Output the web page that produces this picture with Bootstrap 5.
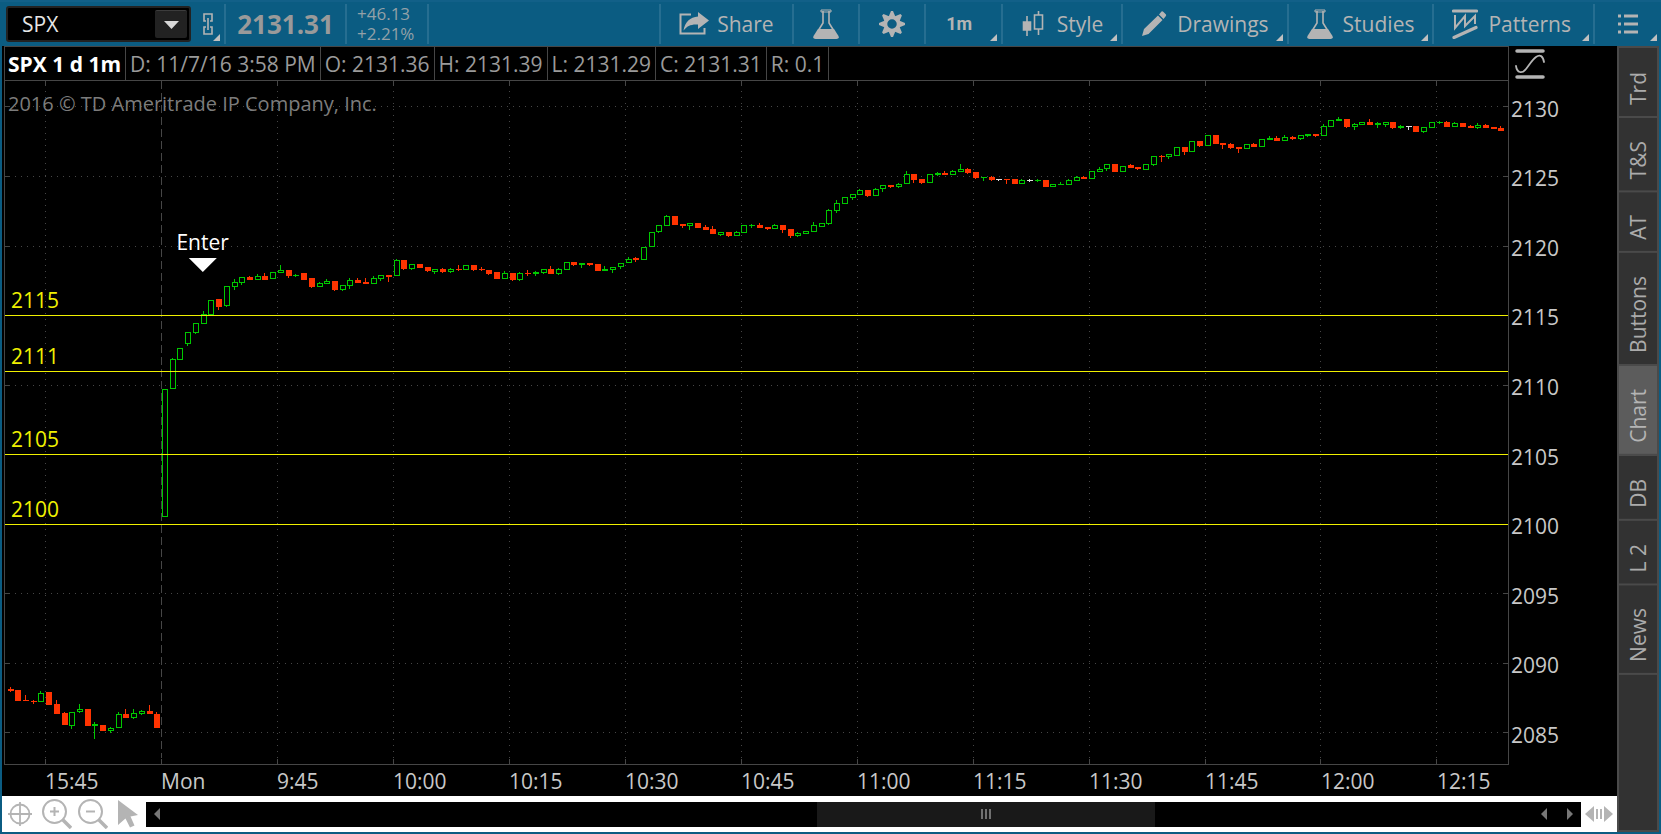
<!DOCTYPE html>
<html lang="en">
<head>
<meta charset="utf-8">
<meta name="viewport" content="width=device-width, initial-scale=1">
<title>SPX 1 d 1m</title>
<link href="https://cdn.jsdelivr.net/npm/bootstrap@5.3.0/dist/css/bootstrap.min.css" rel="stylesheet">
<style>
:root{--frame:#0b5c82;--ink:#b4b4b4;--line:#464646}
body{font-family:"Open Sans","Noto Sans",sans-serif;font-size:21px;line-height:28px;color:#c8c8c8;background:#000}
button{font:inherit;color:inherit;background:none;border:0;padding:0}
svg{display:block;flex:none}
.topbar{height:46px;flex:none;background:var(--frame);border-top:2px solid #126088;padding:2px 0 2px 6px;color:var(--ink)}
.symbol-box{width:185px;height:36px;margin:2px 0;background:#000;border:2px solid #222;border-radius:3px;padding:2px}
.symbol-box input{width:100%;min-width:0;background:#000;border:0;color:#e6e6e6;font-size:21px;padding:0 0 0 12px;outline:0}
.symbol-box button{width:32px;flex:none;background:#222;border-top:1px solid #3c3c3c;border-radius:2px;display:flex;align-items:center;justify-content:center}
.tool{position:relative;height:40px;border-left:2px solid #266e91;display:flex;align-items:center;justify-content:center;gap:10px;padding:0 18px;white-space:nowrap}
.tool.slim{width:66px;padding:0}
.tool.menu-tool{width:68px;padding:0}
.tool.share{gap:8px}
.tool.patterns{padding-right:22px}
.tool.wide{width:77px;padding:0 8px 0 0;font-family:Roboto,sans-serif;font-weight:700;font-size:18px}
.tool.link-tool{width:33px;padding:0;border:0}
.has-menu::after{content:"";position:absolute;right:4px;bottom:3px;border-left:7px solid transparent;border-bottom:7px solid #c0c0c0}
.quote{border-left:2px solid #266e91;height:40px;font-size:26px;font-weight:700;color:#9a9a9a;width:121px;display:flex;align-items:center;justify-content:center}
.delta{border-left:2px solid #266e91;border-right:2px solid #266e91;height:40px;width:84px;padding-left:10px;font-size:17px;line-height:20px;color:#93a1a8;display:flex;flex-direction:column;justify-content:center}
.frame{border:2px solid var(--frame);border-top:0;min-height:0}
.chart-area{min-height:0}
.chart-main{padding-left:2px;min-height:0}
.info{height:34px;flex:none;border-top:1px solid var(--line);border-left:1px solid var(--line);border-right:1px solid var(--line);color:#9a9a9a}
.info span{border-right:1px solid var(--line);padding:0 4px;display:flex;align-items:center;white-space:nowrap}
.info .title{color:#fff;font-weight:700;padding-left:3px}
.plot{position:relative;min-height:0}
.plot svg{position:absolute;inset:0;width:100%;height:100%}
.notice{position:absolute;left:4px;top:10px;color:#7c7c7c;font-size:20px}
.level{position:absolute;left:7px;color:#f0f000;padding-bottom:1px;transform:translateY(-100%)}
.marker{position:absolute;left:13.200%;top:28.100%;transform:translate(-50%,-100%);color:#fff;display:flex;flex-direction:column;align-items:center}
.marker::after{content:"";margin-top:2px;border:14px solid transparent;border-top-color:#fff;border-bottom:0}
.times{height:31px;flex:none;display:grid;grid-template-columns:41fr repeat(12,116fr) 72fr;align-items:center}
.times span{min-width:0;white-space:nowrap}
.prices{width:108px;min-height:0;display:grid;grid-template-rows:280fr repeat(10,695fr) 265fr}
.prices>*{min-height:0;display:flex;align-items:center;padding-left:2px}
.prices .scale{align-items:flex-start;padding:3px 0 0 6px;overflow:visible;height:0}
.strip{height:36px;flex:none;background:#fff}
.strip-tools{width:144px;gap:6px;padding-left:6px}
.track{height:25px;background:#000}
.thumb{background:#191919;width:23.600%;margin-left:45.200%;display:flex;align-items:center;justify-content:center}
.side{width:42px;background:#323232;border:2px solid #4a4a4a;padding-top:1px}
.side button{writing-mode:vertical-rl;transform:rotate(180deg);border-top:2px solid #4a4a4a;padding:11px 0 23px;line-height:38px;color:#ababab;text-align:left;width:100%}
.side button.active{background:#5c5c5c;color:#b4b4b4}
</style>
</head>
<body>
<div class="d-flex flex-column vh-100">
<header class="topbar d-flex">
  <div class="symbol-box d-flex">
    <input type="text" value="SPX" aria-label="Symbol">
    <button type="button" aria-label="Symbol list"><svg width="15" height="8"><path d="M0 0h15l-7.500 8z" fill="#d8d8d8"/></svg></button>
  </div>
  <button type="button" class="tool link-tool has-menu" aria-label="Link"><svg width="12" height="24" viewBox="0 0 12 24" fill="none" stroke="#b4b4b4" stroke-width="1.600"><path d="M4 9H2V2h8v7H8M4 15H2v7h8v-7H8M6 6v12"/></svg></button>
  <div class="quote">2131.31</div>
  <div class="delta"><span>+46.13</span><span>+2.21%</span></div>
  <nav class="d-flex ms-auto" aria-label="Chart tools">
    <button type="button" class="tool share"><svg width="30" height="24" viewBox="0 0 30 24"><path d="M12 2.500H1.500v19h24V16" fill="none" stroke="#b4b4b4" stroke-width="2"/><path d="M19 0l11 8.500-11 8.500v-4.500C12 12 8 14 4.500 18.500 6 10 11 5 19 4.500z" fill="#b4b4b4"/></svg>Share</button>
    <button type="button" class="tool slim" aria-label="Edit studies"><svg width="26" height="30" viewBox="0 0 26 30"><use href="#flask"/></svg></button>
    <button type="button" class="tool slim" aria-label="Settings"><svg id="gear" width="26" height="26" viewBox="-13 -13 26 26"></svg></button>
    <button type="button" class="tool wide has-menu">1m</button>
    <button type="button" class="tool has-menu"><svg width="26" height="26" viewBox="0 0 26 26" fill="none" stroke="#b4b4b4" stroke-width="1.600"><path d="M6 5v20M17.500 0v4M17.500 18v6M13.500 4h8v14h-8z"/><path d="M2.500 11h7v8h-7z" fill="#b4b4b4"/></svg>Style</button>
    <button type="button" class="tool has-menu"><svg width="26" height="26" viewBox="0 0 26 26" fill="#b4b4b4"><path d="M1 25l2-7L17 4.500l4.500 4.500L7.500 23zM18 3.500l2.500-3q1-.5 2 .5l2.500 2.500q.5 1-.5 2L22.500 8z"/></svg>Drawings</button>
    <button type="button" class="tool has-menu"><svg width="26" height="30" viewBox="0 0 26 30"><g id="flask"><path d="M8 1h10v2H8z" fill="none" stroke="#b4b4b4"/><path d="M10 2v12L5 22M16 2v12l5 8" fill="none" stroke="#b4b4b4" stroke-width="1.600"/><path d="M5 20h16l4.500 7q1 3-2 3h-21q-3 0-2-3z" fill="#b4b4b4"/></g></svg>Studies</button>
    <button type="button" class="tool patterns has-menu"><svg width="26" height="30" viewBox="0 0 26 30" fill="none" stroke="#b4b4b4"><path d="M1.500 2h23" stroke-width="3.200" stroke-linecap="round"/><path d="M3 6v13L13 7v10l10-10v8" stroke-width="2"/><path d="M2 28.500L24 18.500" stroke-width="3.200" stroke-linecap="round"/></svg>Patterns</button>
    <button type="button" class="tool menu-tool has-menu" aria-label="Menu"><svg width="20" height="20" viewBox="0 0 20 20" stroke="#b4b4b4" stroke-width="3"><path d="M0 2h3M6 2h14M0 10h3M6 10h14M0 18h3M6 18h14"/></svg></button>
  </nav>
</header>

<main class="frame d-flex flex-grow-1">
  <div class="d-flex flex-column flex-grow-1">
    <section class="chart-area d-flex flex-grow-1" aria-label="Chart">
      <div class="chart-main d-flex flex-column flex-grow-1">
        <div class="info d-flex"><span class="title">SPX 1 d 1m</span><span>D: 11/7/16 3:58 PM</span><span>O: 2131.36</span><span>H: 2131.39</span><span>L: 2131.29</span><span>C: 2131.31</span><span>R: 0.1</span></div>
        <div class="plot flex-grow-1">
          <svg id="plot" viewBox="4 80 1505 685" preserveAspectRatio="none" shape-rendering="crispEdges"></svg>
          <div class="notice">2016 © TD Ameritrade IP Company, Inc.</div>
          <div class="marker">Enter</div>
        </div>
        <div class="times" id="times"><span></span></div>
      </div>
      <div class="prices" id="prices"><div class="scale"><svg width="30" height="30" viewBox="0 0 30 30" fill="none" stroke="#b4b4b4" stroke-linecap="round"><path d="M2 2h26M2 28h26" stroke-width="3.500"/><path d="M1 17C2 24 7 25 11 20S17 11 21 8s7-1 8 5" stroke-width="1.800"/></svg></div></div>
    </section>
    <div class="strip d-flex align-items-center">
      <div class="strip-tools d-flex align-items-center">
        <button type="button" class="me-1" aria-label="Crosshair"><svg width="24" height="24" viewBox="0 0 24 24" fill="none" stroke="#b4b4b4" stroke-width="1.800"><circle cx="12" cy="12" r="9.500"/><path d="M12 0v24M0 12h24"/></svg></button>
        <button type="button" aria-label="Zoom in"><svg width="30" height="30" viewBox="0 0 30 30" fill="none" stroke="#b4b4b4" stroke-width="2"><circle cx="12.500" cy="12.500" r="11.500"/><path d="M8 12.500h9M12.500 8v9"/><path d="M20.500 20.500l8.500 8.500" stroke-width="3.500"/></svg></button>
        <button type="button" aria-label="Zoom out"><svg width="30" height="30" viewBox="0 0 30 30" fill="none" stroke="#b4b4b4" stroke-width="2"><circle cx="12.500" cy="12.500" r="11.500"/><path d="M8 12.500h9"/><path d="M20.500 20.500l8.500 8.500" stroke-width="3.500"/></svg></button>
        <button type="button" class="ms-1" aria-label="Pointer"><svg width="20" height="28" viewBox="0 0 20 28" fill="#b4b4b4"><path d="M0 0l20 15-7.500 1.500 4 9-4.500 2-4.500-9L0 25z"/></svg></button>
      </div>
      <div class="track d-flex flex-grow-1">
        <button type="button" class="px-2" aria-label="Scroll left"><svg width="6" height="12"><path d="M6 0v12L0 6z" fill="#777"/></svg></button>
        <div class="thumb"><svg width="10" height="10"><path d="M1 0v10M5 0v10M9 0v10" stroke="#707070" stroke-width="2"/></svg></div>
        <div class="d-flex gap-3 ms-auto px-2">
          <button type="button" class="me-1" aria-label="Step left"><svg width="6" height="12"><path d="M6 0v12L0 6z" fill="#777"/></svg></button>
          <button type="button" aria-label="Step right"><svg width="6" height="12"><path d="M0 0v12l6-6z" fill="#777"/></svg></button>
        </div>
      </div>
      <button type="button" class="px-1" aria-label="Expand time axis"><svg width="28" height="16" viewBox="0 0 28 16" fill="#b4b4b4"><path d="M9 0v16L0 8zM19 0v16l9-8zM11 3h2v10h-2zM15 3h2v10h-2z"/></svg></button>
    </div>
  </div>
  <nav class="side d-flex flex-column flex-shrink-0" aria-label="Panels">
    <button type="button">Trd</button><button type="button">T&amp;S</button><button type="button">AT</button><button type="button">Buttons</button><button type="button" class="active">Chart</button><button type="button">DB</button><button type="button">L 2</button><button type="button">News</button>
  </nav>
</main>
</div>
<script src="https://cdn.jsdelivr.net/npm/bootstrap@5.3.0/dist/js/bootstrap.bundle.min.js"></script>
<script>
// One bar per minute: colour, body top, body bottom, high, low (in chart units)
const bars = `r689,691,687,692 r690,701 r700,701,695 r701,702,700,704 g693,702,691 r692,705 r704,714,700 r713,725,712 g712,726,712,729 g709,712,704,713 r709,726 g724,726,722,739 r725,731 g728,731,727,733 g714,728,712 r714,718,709 g713,718,709,719 g711,714,710,715 r711,714,705 r714,728,712
g389,517 g359,389,358 g348,360 g332,344,332,346 g323,333,323,334 g314,324,311 g300,315 r299,307,299,310 g286,306,286,307 g282,287,279,290
g277,283,277,285 r277,280,276 g276,280,274 r276,280,273 g272,279 g270,273,265 r270,276,270,278 g275,276,274,277 r273,280 r278,287,278,288
g283,287,282 g281,284,279 r281,290,281,291 g285,290,285,291 g280,286,278,289 r280,283,278 r282,284,278 g278,284,276 g275,279,275,281 r275,277,275,282
g260,276,259 r260,269,260,270 g264,269,264,270 r264,268 r267,271,267,272 g269,272,269,274 r269,272,268,273 g269,272,268,273 r269,270,265,271 g265,270
r265,270,265,271 r269,270,267,271 r270,274,270,275 r272,279 g273,279,271 r273,280,273,281 g273,280,272,281 r273,274,270,276 g272,274,271,276 g269,273,269,274
r269,274,266 g269,274,268,275 g262,270 r262,265,262,266 g263,265,263,268 r263,265,263,266 r264,271 g269,271,266 g267,270,267,273 g263,267,263,269
g259,263,257 r258,260,257,262 g247,260 g232,247 g225,232,225,233 g216,226,215 r216,225 r224,226,224,228 g223,226,223,230 r223,228
r227,230,225 r229,234,226 g232,235,232,236 r232,236,232,237 g232,236,231 g225,233 g225,226,224,228 r225,228,223 r227,229,227,230 g225,229,224
r225,230,225,233 r229,236,229,238 g233,236,232,237 g231,234 g225,232,222 g223,227 g210,224,209,225 g203,211,200,213 g197,204 g194,198,194,200
g190,195,189 r190,196,190,197 g189,196,188 g185,189,185,192 r185,187,185,188 g184,187,183,188 g174,184,171 r174,180,174,183 r179,183,179,184 g174,183
g173,175,172,176 r173,175,171 g171,175,170 g169,172,164 r169,173,168,174 r172,178,172,179 g177,178,177,181 r177,180,176,181 w179,180,179,181 r179,180,179,184
r179,184 g180,184,179 w180,181,179,182 g180,181,179,182 r180,187 g184,187 g184,185,182 g180,185,179 g177,181,176 r177,179,176
g171,179 g169,172,167 g164,169,164,171 r164,172 g166,172 r165,168,164 r167,169,167,170 g164,170 g156,165,156,166 r156,157,155,162
g154,157,154,159 g147,156 r147,152,147,155 g141,152 r141,146,141,147 g135,146 r135,144 r143,145,143,149 r144,148,143,149 r147,149,147,153
g144,149 r144,147,143 g139,147 g138,140,136 r138,141,136 g137,141,135 r137,139,136,140 g135,139,135,140 g134,136,134,137 r134,136,134,137
g126,136,124 g120,127 g119,121,117 r119,127,119,128 g124,127,123,130 g122,125 r122,125,119 g123,125,122,128 g122,125,122,127 r122,128,122,129
g126,128,125,129 w126,127,126,130 r126,132 g127,132,127,133 g122,128 g122,123,121,124 r122,127,121 g123,127,122 r123,127 r126,128,125
g125,128,123,129 r125,128,124 r127,129 r128,131,126`.trim().split(/\s+/);
const colour = {r:'#ff3300', g:'#00c800', w:'#e0e0e0'};
const box = (x,y,w,h,f) => `<rect x="${x}" y="${y}" width="${w}" height="${h}" fill="${f}"/>`;
const yOf = p => Math.round(106.42 + (2130 - p) * 13.91);
const line = '#464646';
let out = '';
for (let p = 2130; p >= 2085; p -= 5) {
  const y = yOf(p);
  out += `<path d="M15 ${y}.5H1502" stroke="${line}" stroke-dasharray="1 5"/>` + box(5,y,5,1,line) + box(1503,y,5,1,line);
}
const times = ['15:45','Mon','9:45','10:00','10:15','10:30','10:45','11:00','11:15','11:30','11:45','12:00','12:15'];
times.forEach((t,i) => {
  const x = Math.round(45 + i * 115.95);
  out += `<path d="M${x}.5 ${i==1?81:91}V758" stroke="${line}" stroke-dasharray="${i==1?'8 4':'1 5'}"/>` + box(x,81,1,5,line) + box(x,759,1,5,line);
  document.getElementById('times').insertAdjacentHTML('beforeend', `<span>${t}</span>`);
});
out += box(4,80,1505,1,line) + box(4,764,1505,1,line) + box(4,80,1,685,line) + box(1508,80,1,685,line);
bars.forEach((b,i) => {
  const c = colour[b[0]], [top,bot,hi=top,lo=bot] = b.slice(1).split(',').map(Number);
  const x = Math.round(162 + (i - 20) * 7.725);
  out += box(x+2,hi,1,lo-hi,c) + box(x,top,6,bot-top,c);
  if (b[0] === 'g' && bot - top > 2) out += box(x+1,top+1,4,bot-top-2,'#000');
});
const plot = document.getElementById('plot');
[2115,2111,2105,2100].forEach(p => {
  const y = yOf(p);
  out += box(5,y,1503,1,'#f0f000');
  plot.insertAdjacentHTML('afterend', `<div class="level" style="top:${((y-80)/685*100).toFixed(2)}%">${p}</div>`);
});
plot.innerHTML = out;
for (let p = 2130; p >= 2085; p -= 5)
  document.getElementById('prices').insertAdjacentHTML('beforeend', `<div>${p}</div>`);
let gear = '';
for (let a = 0; a < 360; a += 45) gear += `<path d="M-3.500 -7L-1 -13H1L3.500 -7z" transform="rotate(${a})" fill="#b4b4b4"/>`;
document.getElementById('gear').innerHTML = gear + '<circle r="6.500" fill="none" stroke="#b4b4b4" stroke-width="3.500"/>';
</script>
</body>
</html>
